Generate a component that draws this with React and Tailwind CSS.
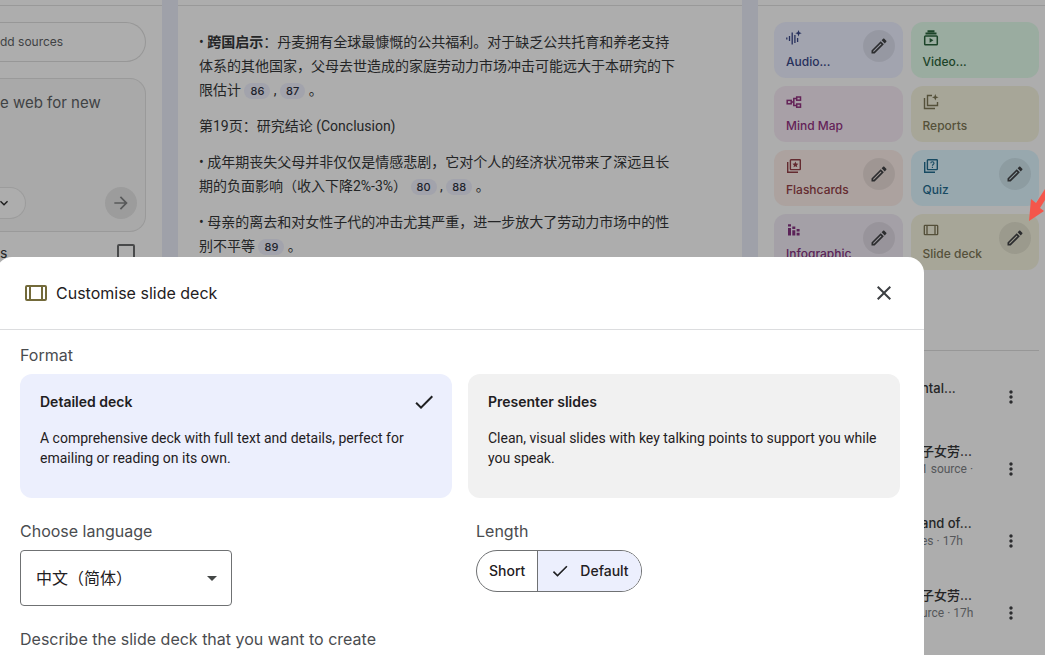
import {
  MdArrowDropDown,
  MdArrowForward,
  MdCheck,
  MdClose,
  MdKeyboardArrowDown,
  MdMoreVert,
  MdOutlineEdit,
} from 'react-icons/md'

const TOOLS = [
  { label: 'Audio...', icon: AudioIcon, edit: true, color: 'bg-[#a2a4af] text-[#27305c]' },
  { label: 'Video...', icon: VideoIcon, edit: false, color: 'bg-[#9aaca0] text-[#1c4429]' },
  { label: 'Mind Map', icon: MindMapIcon, edit: false, color: 'bg-[#a8a0a7] text-[#642358]' },
  { label: 'Reports', icon: ReportsIcon, edit: false, color: 'bg-[#a7a698] text-[#55513a]' },
  { label: 'Flashcards', icon: FlashcardsIcon, edit: true, color: 'bg-[#aca29f] text-[#642b30]' },
  { label: 'Quiz', icon: QuizIcon, edit: true, color: 'bg-[#98a8ae] text-[#174a62]' },
  { label: 'Infographic', icon: InfographicIcon, edit: true, color: 'bg-[#a4a0a7] text-[#5b2358]' },
  { label: 'Slide deck', icon: SlidesIcon, edit: true, color: 'bg-[#a7a698] text-[#55503a]' },
]

const NOTES = [
  { title: 'ntal...', lines: [''] },
  { title: '子女劳...', lines: ['1 source ·', ''] },
  { title: 'and of...', lines: ['es · 17h', ''] },
  { title: '子女劳...', lines: ['urce · 17h', ''] },
]

export default function App() {
  return (
    <div className="relative h-screen overflow-hidden bg-[#9fa1a9] font-[Inter,'Noto_Sans_CJK_SC',sans-serif] text-[#242526]">
      <div className="flex h-full gap-4">
        <SourcesPanel />
        <ChatPanel />
        <StudioPanel />
      </div>
      <CustomiseDialog />
      <PointerArrow />
    </div>
  )
}

function SourcesPanel() {
  return (
    <aside className="w-[162px] shrink-0 bg-[#adadad]">
      <div className="h-[6px] border-b border-[#999]" />
      <div className="flex flex-col gap-4 pt-4 pr-4">
        <button className="flex h-10 items-center rounded-r-full border border-l-0 border-[#979797] text-xs text-[#404244]">
          dd sources
        </button>
        <div className="flex h-[154px] flex-col justify-between rounded-r-2xl border border-l-0 border-[#9a9a9a] bg-[#a9a9a9] pt-3 pr-2 pb-3">
          <p className="text-[15px] leading-6 text-[#404244]">e web for new</p>
          <div className="flex items-center justify-between">
            <button aria-label="Source type" className="flex h-8 w-[26px] items-center rounded-r-full border border-l-0 border-[#9c9c9c] bg-[#adadad]">
              <MdKeyboardArrowDown className="-ml-1 size-4 text-[#1c1c1c]" />
            </button>
            <button aria-label="Search" className="flex size-8 items-center justify-center rounded-full bg-[#9c9c9c] text-[#58595a]">
              <MdArrowForward className="size-5" />
            </button>
          </div>
        </div>
      </div>
      <label className="flex items-center justify-between pt-[11px] pr-[27px] text-sm">
        <span>s</span>
        <input type="checkbox" className="size-[18px] appearance-none rounded-xs border-2 border-[#48494a]" />
      </label>
    </aside>
  )
}

function ChatPanel() {
  return (
    <main className="min-w-0 flex-1 bg-[#adadad]">
      <div className="h-[6px] border-b border-[#999]" />
      <div className="flex flex-col gap-3 pt-6 pl-[21px] font-[Roboto,'Noto_Sans_CJK_SC',sans-serif] text-sm leading-6 whitespace-nowrap">
        <p>
          • <b className="font-bold">跨国启示</b>：丹麦拥有全球最慷慨的公共福利。对于缺乏公共托育和养老支持
          <br />
          体系的其他国家，父母去世造成的家庭劳动力市场冲击可能远大于本研究的下
          <br />
          限估计 <Cite n="86" /> , <Cite n="87" /> 。
        </p>
        <p>第19页：研究结论 (Conclusion)</p>
        <p>
          • 成年期丧失父母并非仅仅是情感悲剧，它对个人的经济状况带来了深远且长
          <br />
          期的负面影响（收入下降2%-3%） <Cite n="80" /> , <Cite n="88" /> 。
        </p>
        <p>
          • 母亲的离去和对女性子代的冲击尤其严重，进一步放大了劳动力市场中的性
          <br />
          别不平等 <Cite n="89" /> 。
        </p>
      </div>
    </main>
  )
}

function Cite({ n }) {
  return (
    <button className="rounded-full bg-[#a2a3ac] px-[6px] font-[Inter,sans-serif] text-[11px] leading-4 font-medium text-[#1d1f2b]">
      {n}
    </button>
  )
}

function StudioPanel() {
  return (
    <aside className="w-[287px] shrink-0 bg-[#adadad]">
      <div className="h-[6px] border-b border-[#999]" />
      <div className="grid grid-cols-2 gap-2 pt-4 pr-[6px] pl-4">
        {TOOLS.map((tool) => (
          <ToolCard key={tool.label} {...tool} />
        ))}
      </div>
      <div className="mt-20 mr-[6px] border-b border-[#979797]" />
      <ul className="pt-[10px]">
        {NOTES.map((note, i) => (
          <NoteRow key={i} {...note} />
        ))}
      </ul>
    </aside>
  )
}

function ToolCard({ label, icon: Icon, edit, color }) {
  return (
    <div className={`flex h-14 items-start justify-between rounded-xl p-2 pl-3 ${color}`}>
      <div className="flex flex-col gap-2">
        <Icon className="size-4" />
        <span className="text-xs leading-4 font-medium">{label}</span>
      </div>
      {edit && (
        <button aria-label={`Customise ${label}`} className="flex size-8 shrink-0 items-center justify-center rounded-full bg-black/7 text-[#2c2d2f]">
          <MdOutlineEdit className="size-5" />
        </button>
      )}
    </div>
  )
}

function NoteRow({ title, lines }) {
  return (
    <li className="flex h-[72px] items-center justify-between pr-6 pl-[163px]">
      <div className="whitespace-nowrap">
        <p className="text-[13px] leading-[18px] font-medium">{title}</p>
        {lines.map((line, i) => (
          <p key={i} className="h-[18px] font-[Roboto,sans-serif] text-xs leading-[18px] text-[#55575a]">{line}</p>
        ))}
      </div>
      <button aria-label="More">
        <MdMoreVert className="size-5 text-[#2c2d2f]" />
      </button>
    </li>
  )
}

function CustomiseDialog() {
  return (
    <section
      role="dialog"
      aria-label="Customise slide deck"
      className="absolute top-[257px] right-[121px] -bottom-4 -left-1 rounded-2xl bg-white"
    >
      <header className="flex h-[73px] items-center justify-between border-b border-[#dcdddf] px-7">
        <h2 className="flex items-center gap-2 text-base text-[#1f2022]">
          <SlidesIcon className="size-6 text-[#736a3a]" />
          Customise slide deck
        </h2>
        <button aria-label="Close">
          <MdClose className="size-6 text-[#3c3f42]" />
        </button>
      </header>

      <div className="px-6 pt-[13px] text-[#1f2022]">
        <h3 className="mb-[7px] text-base text-[#4a4c4f]">Format</h3>
        <div className="grid grid-cols-2 gap-4">
          <FormatCard
            title="Detailed deck"
            text="A comprehensive deck with full text and details, perfect for emailing or reading on its own."
            selected
          />
          <FormatCard
            title="Presenter slides"
            text="Clean, visual slides with key talking points to support you while you speak."
          />
        </div>

        <div className="mt-[21px] grid grid-cols-2 gap-8">
          <div>
            <label htmlFor="language" className="mb-[7px] block text-base text-[#4a4c4f]">Choose language</label>
            <div className="relative w-[212px]">
              <select id="language" className="h-14 w-full appearance-none rounded-sm border border-[#6f7173] bg-white px-[15px] text-base">
                <option>中文（简体）</option>
              </select>
              <MdArrowDropDown className="pointer-events-none absolute top-4 right-2 size-6 text-[#444746]" />
            </div>
          </div>
          <div>
            <h3 className="mb-[7px] text-base text-[#4a4c4f]">Length</h3>
            <div className="inline-flex h-[42px] overflow-hidden rounded-full border border-[#6f7173] text-sm font-medium">
              <button className="border-r border-[#6f7173] px-3">Short</button>
              <button aria-pressed="true" className="flex items-center gap-[10px] bg-[#eceffd] px-3">
                <MdCheck className="size-5" />
                Default
              </button>
            </div>
          </div>
        </div>

        <h3 className="mt-[21px] text-base text-[#4a4c4f]">Describe the slide deck that you want to create</h3>
      </div>
    </section>
  )
}

function FormatCard({ title, text, selected }) {
  return (
    <button
      className={`flex h-[124px] flex-col gap-4 rounded-xl px-5 pt-[18px] pr-4 text-left ${selected ? 'bg-[#eceffd]' : 'bg-[#f1f1f1]'}`}
    >
      <span className="flex h-5 w-full items-center justify-between text-sm font-semibold">
        {title}
        {selected && <MdCheck className="size-6" />}
      </span>
      <span className="font-[Roboto,sans-serif] text-sm leading-5">{text}</span>
    </button>
  )
}

// red marker pointing at the slide deck pencil
function PointerArrow() {
  return (
    <svg className="absolute top-[184px] right-0 h-10 w-[18px]" viewBox="0 0 18 40" fill="#f4564b">
      <path d="M18 5L9 19L4 15L2 37L17 27L13 24L18 16Z" />
    </svg>
  )
}

function AudioIcon({ className }) {
  return (
    <svg className={className} viewBox="0 0 16 16" fill="none" stroke="currentColor" strokeWidth="1.3">
      <path d="M.8 7.5v2M3.5 6v5M6.2 2.5v12M8.9 5v8M11.6 8v4" />
      <path d="M12.5 0l.9 2.3 2.3.9-2.3.9-.9 2.3-.9-2.3-2.3-.9 2.3-.9z" fill="currentColor" stroke="none" />
    </svg>
  )
}

function VideoIcon({ className }) {
  return (
    <svg className={className} viewBox="0 0 16 16" fill="none" stroke="currentColor" strokeWidth="1.5">
      <rect x="1.7" y="6" width="12.6" height="8.7" rx=".8" />
      <path d="M2.5 3.6h11M4.5 1.3h7" strokeWidth="2" />
      <path d="M6.6 7.9v4.8l3.8-2.4z" fill="currentColor" stroke="none" />
    </svg>
  )
}

function MindMapIcon({ className }) {
  return (
    <svg className={className} viewBox="0 0 16 16" fill="none" stroke="currentColor" strokeWidth="1.5">
      <rect x="1.2" y="6.4" width="4" height="3.4" />
      <rect x="10.7" y="3" width="3.8" height="3.2" />
      <rect x="10.7" y="10" width="3.8" height="3.2" />
      <path d="M5.2 8.1h2.6M10.7 4.6H7.8v7h2.9" />
    </svg>
  )
}

function ReportsIcon({ className }) {
  return (
    <svg className={className} viewBox="0 0 16 16" fill="none" stroke="currentColor" strokeWidth="1.4">
      <path d="M1.5 4v10.5H12M9 1.5H4.5v10h10V8" />
      <path d="M12.3 0l.9 2.4 2.4.9-2.4.9-.9 2.4-.9-2.4L9 3.3l2.4-.9z" fill="currentColor" stroke="none" />
    </svg>
  )
}

function FlashcardsIcon({ className }) {
  return (
    <svg className={className} viewBox="0 0 16 16" fill="none" stroke="currentColor" strokeWidth="1.4">
      <path d="M1.7 4v10.3H12" />
      <rect x="4.4" y="1.7" width="9.9" height="9.9" rx=".6" />
      <path d="M9.4 3.6l.9 2 2.1.2-1.6 1.4.5 2.1-1.9-1.1-1.9 1.1.5-2.1-1.6-1.4 2.1-.2z" fill="currentColor" stroke="none" />
    </svg>
  )
}

function QuizIcon({ className }) {
  return (
    <svg className={className} viewBox="0 0 16 16" fill="none" stroke="currentColor" strokeWidth="1.4">
      <path d="M1.7 4v10.3H12" />
      <rect x="4.4" y="1.7" width="9.9" height="9.9" rx=".6" />
      <path d="M7.8 5.2c0-2 3.2-2 3.2 0 0 1.2-1.6 1.3-1.6 2.5M9.4 8.7v1.2" strokeWidth="1.1" />
    </svg>
  )
}

function InfographicIcon({ className }) {
  return (
    <svg className={className} viewBox="0 0 16 16" fill="currentColor">
      <path d="M2 6h3v7.5H2zM6.3 8.3h3v5.2h-3zM10.6 10.8h3v2.7h-3z" />
      <path d="M2 2.2h3v2.4H2zM6.3 4.6h3v2.3h-3zM10.6 7h3v2.4h-3z" />
    </svg>
  )
}

function SlidesIcon({ className }) {
  return (
    <svg className={className} viewBox="0 0 24 24" fill="none" stroke="currentColor" strokeWidth="2">
      <rect x="2" y="5" width="20" height="14" rx="1" />
      <path d="M6 5v14M18 5v14" />
    </svg>
  )
}
